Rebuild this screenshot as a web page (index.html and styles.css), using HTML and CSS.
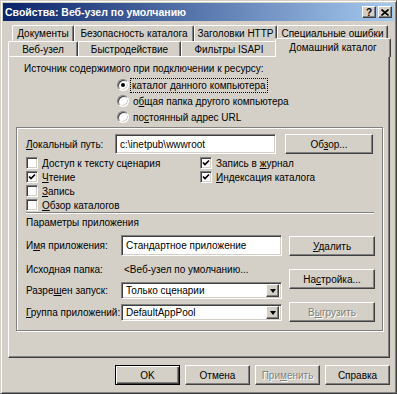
FILE: index.html
```html
<!DOCTYPE html>
<html lang="ru">

<head>
    <meta charset="UTF-8">
    <title>Свойства: Веб-узел по умолчанию</title>
    <link rel="stylesheet" href="styles.css">
</head>

<body>
    <div class="window">
        <div class="titlebar">
            <span class="title">Свойства: Веб-узел по умолчанию</span>
            <span class="caption-btn help">?</span>
            <span class="caption-btn">
                <svg width="8" height="7" viewBox="0 0 8 7"><path d="M0.5 0.5L7.5 6.5M7.5 0.5L0.5 6.5" stroke="#000" stroke-width="1.6"/></svg>
            </span>
        </div>

        <div class="tabs">
            <div class="tab-row row-back">
                <div class="tab w-docs">Документы</div>
                <div class="tab w-sec">Безопасность каталога</div>
                <div class="tab w-http">Заголовки HTTP</div>
                <div class="tab w-err">Специальные ошибки</div>
            </div>
            <div class="tab-row row-front">
                <div class="tab w-site">Веб-узел</div>
                <div class="tab w-perf">Быстродействие</div>
                <div class="tab w-isapi">Фильтры ISAPI</div>
                <div class="tab w-home active">Домашний каталог</div>
            </div>
        </div>

        <div class="panel">
            <div class="source-label">Источник содержимого при подключении к ресурсу:</div>
            <div class="radios">
                <div class="radio-row"><span class="radio checked"></span><span class="focus">каталог <u>д</u>анного компьютера</span></div>
                <div class="radio-row"><span class="radio"></span><span class="radio-text">о<u>б</u>щая папка другого компьютера</span></div>
                <div class="radio-row"><span class="radio"></span><span class="radio-text">по<u>с</u>тоянный адрес URL</span></div>
            </div>

            <div class="settings">
                <div class="path-row">
                    <span class="path-label"><u>Л</u>окальный путь:</span>
                    <span class="field path-field">c:\inetpub\wwwroot</span>
                    <span class="button browse-btn"><span>Об<u>з</u>ор...</span></span>
                </div>

                <div class="checks">
                    <div class="check-col left-col">
                        <div class="check-row"><span class="checkbox"></span><span>Доступ к тексту сценария</span></div>
                        <div class="check-row"><span class="checkbox"><svg width="8" height="8" viewBox="0 0 8 8"><path d="M1 3.5L3 5.5L7 1.5" stroke="#000" stroke-width="1.7" fill="none"/></svg></span><span><u>Ч</u>тение</span></div>
                        <div class="check-row"><span class="checkbox"></span><span><u>З</u>апись</span></div>
                        <div class="check-row"><span class="checkbox"></span><span><u>О</u>бзор каталогов</span></div>
                    </div>
                    <div class="check-col">
                        <div class="check-row"><span class="checkbox"><svg width="8" height="8" viewBox="0 0 8 8"><path d="M1 3.5L3 5.5L7 1.5" stroke="#000" stroke-width="1.7" fill="none"/></svg></span><span>Запись в <u>ж</u>урнал</span></div>
                        <div class="check-row"><span class="checkbox"><svg width="8" height="8" viewBox="0 0 8 8"><path d="M1 3.5L3 5.5L7 1.5" stroke="#000" stroke-width="1.7" fill="none"/></svg></span><span><u>И</u>ндексация каталога</span></div>
                    </div>
                </div>

                <div class="separator"></div>
                <div class="app-title">Параметры приложения</div>

                <div class="app">
                    <div class="app-fields">
                        <div class="app-row row-name">
                            <span class="app-label">И<u>м</u>я приложения:</span>
                            <span class="field app-field">Стандартное приложение</span>
                        </div>
                        <div class="app-row row-folder">
                            <span class="app-label">Исходная папка:</span>
                            <span class="app-value">&lt;Веб-узел по умолчанию...</span>
                        </div>
                        <div class="app-row row-select">
                            <span class="app-label">Разре<u>ш</u>ен запуск:</span>
                            <span class="field select"><span>Только сценарии</span><span class="arrow"></span></span>
                        </div>
                        <div class="app-row row-select second">
                            <span class="app-label"><u>Г</u>руппа приложений:</span>
                            <span class="field select"><span>DefaultAppPool</span><span class="arrow"></span></span>
                        </div>
                    </div>
                    <div class="app-buttons">
                        <span class="button"><span><u>У</u>далить</span></span>
                        <span class="button"><span>На<u>с</u>тройка...</span></span>
                        <span class="button disabled"><span>В<u>ы</u>грузить</span></span>
                    </div>
                </div>
            </div>
        </div>

        <div class="footer">
            <span class="button default">OK</span>
            <span class="button">Отмена</span>
            <span class="button disabled"><span>При<u>м</u>енить</span></span>
            <span class="button">Справка</span>
        </div>
    </div>
</body>

</html>
```

FILE: styles.css
```css
body {
    margin: 0;
    font-family: "Liberation Sans", Arial, sans-serif;
    font-size: 10px;
    color: #000000;
}

.window {
    width: 397px;
    height: 394px;
    box-sizing: border-box;
    background-color: #d4d0c8;
    border: 1px solid;
    border-color: #d4d0c8 #404040 #404040 #d4d0c8;
    box-shadow: inset 1px 1px #ffffff, inset -1px -1px #808080;
    padding: 2px;
    display: flex;
    flex-direction: column;
}

/* title bar */
.titlebar {
    height: 18px;
    flex: none;
    background: linear-gradient(to right, #0a246a, #a6caf0);
    display: flex;
    align-items: center;
    padding: 0 2px 0 2px;
}

.title {
    flex: 1;
    color: #ffffff;
    font-weight: bold;
    font-size: 10.5px;
}

.caption-btn {
    width: 14px;
    height: 12px;
    box-sizing: border-box;
    background-color: #d4d0c8;
    border: 1px solid;
    border-color: #ffffff #404040 #404040 #ffffff;
    box-shadow: inset -1px -1px #808080;
    display: flex;
    align-items: center;
    justify-content: center;
    font-weight: bold;
    font-size: 10px;
}

.help {
    margin-right: 2px;
}

/* tabs */
.tabs {
    margin-top: 4px;
    flex: none;
}

.tab-row {
    display: flex;
    height: 16px;
}

.row-back {
    padding-left: 9px;
}

.row-front {
    padding-left: 5px;
    height: 15px;
}

.tab {
    box-sizing: border-box;
    height: 100%;
    flex: none;
    border: 1px solid;
    border-bottom: none;
    border-color: #ffffff #404040 transparent #ffffff;
    box-shadow: inset -1px 0 #808080;
    border-radius: 2px 2px 0 0;
    text-align: center;
    line-height: 15px;
    white-space: nowrap;
}

.w-docs { width: 62px; }
.w-sec { width: 120px; }
.w-http { width: 83px; }
.w-err { width: 111px; }
.w-site { width: 70px; }
.w-perf { width: 103px; }
.w-isapi { width: 96px; }

.w-home {
    width: 116px;
    margin-left: -2px;
}

.tab.active {
    height: 19px;
    margin-top: -3px;
    position: relative;
    z-index: 1;
    background-color: #d4d0c8;
    line-height: 17px;
}

/* page */
.panel {
    margin-left: 5px;
    width: 382px;
    height: 302px;
    flex: none;
    box-sizing: border-box;
    border: 1px solid;
    border-color: #ffffff #404040 #404040 #ffffff;
    box-shadow: inset -1px -1px #808080;
}

.source-label {
    margin: 5px 0 0 15px;
    line-height: 13px;
}

.radios {
    margin: 2px 0 0 108px;
}

.radio-row {
    height: 16px;
    display: flex;
    align-items: center;
}

.radio {
    width: 12px;
    height: 12px;
    box-sizing: border-box;
    border-radius: 50%;
    background-color: #ffffff;
    border: 1px solid;
    border-color: #808080 #ffffff #ffffff #808080;
    box-shadow: inset 1px 1px #404040, inset -1px -1px #d4d0c8;
    margin-right: 2px;
    display: flex;
    align-items: center;
    justify-content: center;
}

.radio.checked::after {
    content: "";
    width: 4px;
    height: 4px;
    border-radius: 50%;
    background-color: #000000;
}

.radio-text {
    padding-left: 2px;
}

.focus {
    outline: 1px dotted #000000;
    padding: 0 1px;
    line-height: 13px;
}

/* inner group */
.settings {
    margin: 2px 0 0 7px;
    width: 367px;
    height: 204px;
    box-sizing: border-box;
    border: 1px solid #808080;
    box-shadow: 1px 1px 0 #ffffff, inset 1px 1px 0 #ffffff;
    padding-left: 9px;
}

.path-row {
    display: flex;
    align-items: center;
    margin-top: 6px;
    height: 20px;
}

.path-label {
    width: 89px;
}

.field {
    box-sizing: border-box;
    background-color: #ffffff;
    border: 1px solid;
    border-color: #808080 #ffffff #ffffff #808080;
    box-shadow: inset 1px 1px #404040, inset -1px -1px #d4d0c8;
    display: flex;
    align-items: center;
    padding-left: 4px;
}

.path-field {
    width: 161px;
    height: 20px;
}

.button {
    box-sizing: border-box;
    height: 20px;
    border: 1px solid;
    border-color: #ffffff #404040 #404040 #ffffff;
    box-shadow: inset -1px -1px #808080;
    display: flex;
    align-items: center;
    justify-content: center;
}

.browse-btn {
    width: 88px;
    margin-left: 9px;
}

.checks {
    display: flex;
    margin-top: 2px;
}

.left-col {
    width: 174px;
}

.check-row {
    height: 14px;
    display: flex;
    align-items: center;
}

.checkbox {
    width: 12px;
    height: 12px;
    box-sizing: border-box;
    background-color: #ffffff;
    border: 1px solid;
    border-color: #808080 #ffffff #ffffff #808080;
    box-shadow: inset 1px 1px #404040, inset -1px -1px #d4d0c8;
    margin-right: 4px;
    display: flex;
    align-items: center;
    justify-content: center;
}

.separator {
    margin-right: 8px;
    border-top: 1px solid #808080;
    border-bottom: 1px solid #ffffff;
}

.app-title {
    margin-top: 2px;
    line-height: 13px;
}

.app {
    display: flex;
    margin-top: 6px;
}

.app-row {
    display: flex;
    align-items: center;
}

.app-label {
    width: 95px;
}

.row-name {
    height: 21px;
}

.app-field {
    width: 161px;
    height: 21px;
}

.row-folder {
    height: 14px;
    margin-top: 6px;
}

.app-value {
    padding-left: 3px;
}

.row-select {
    height: 17px;
    margin-top: 6px;
}

.row-select.second {
    margin-top: 5px;
}

.select {
    width: 161px;
    height: 17px;
    padding-right: 2px;
    justify-content: space-between;
}

.arrow {
    width: 13px;
    height: 13px;
    box-sizing: border-box;
    background-color: #d4d0c8;
    border: 1px solid;
    border-color: #ffffff #404040 #404040 #ffffff;
    box-shadow: inset -1px -1px #808080;
    display: flex;
    align-items: center;
    justify-content: center;
}

.arrow::after {
    content: "";
    border-left: 3px solid transparent;
    border-right: 3px solid transparent;
    border-top: 4px solid #000000;
}

.app-buttons {
    margin-left: 7px;
    width: 86px;
    display: flex;
    flex-direction: column;
}

.app-buttons .button {
    margin-top: 13px;
}

.app-buttons .button:first-child {
    margin-top: 1px;
}

.disabled {
    color: #808080;
    text-shadow: 1px 1px #ffffff;
}

/* bottom buttons */
.footer {
    display: flex;
    gap: 5px;
    margin-top: 7px;
    padding-left: 112px;
}

.footer .button {
    width: 65px;
}

.button.default {
    border-color: #000000;
    box-shadow: inset 1px 1px #ffffff, inset -1px -1px #404040, inset -2px -2px #808080;
}
```
